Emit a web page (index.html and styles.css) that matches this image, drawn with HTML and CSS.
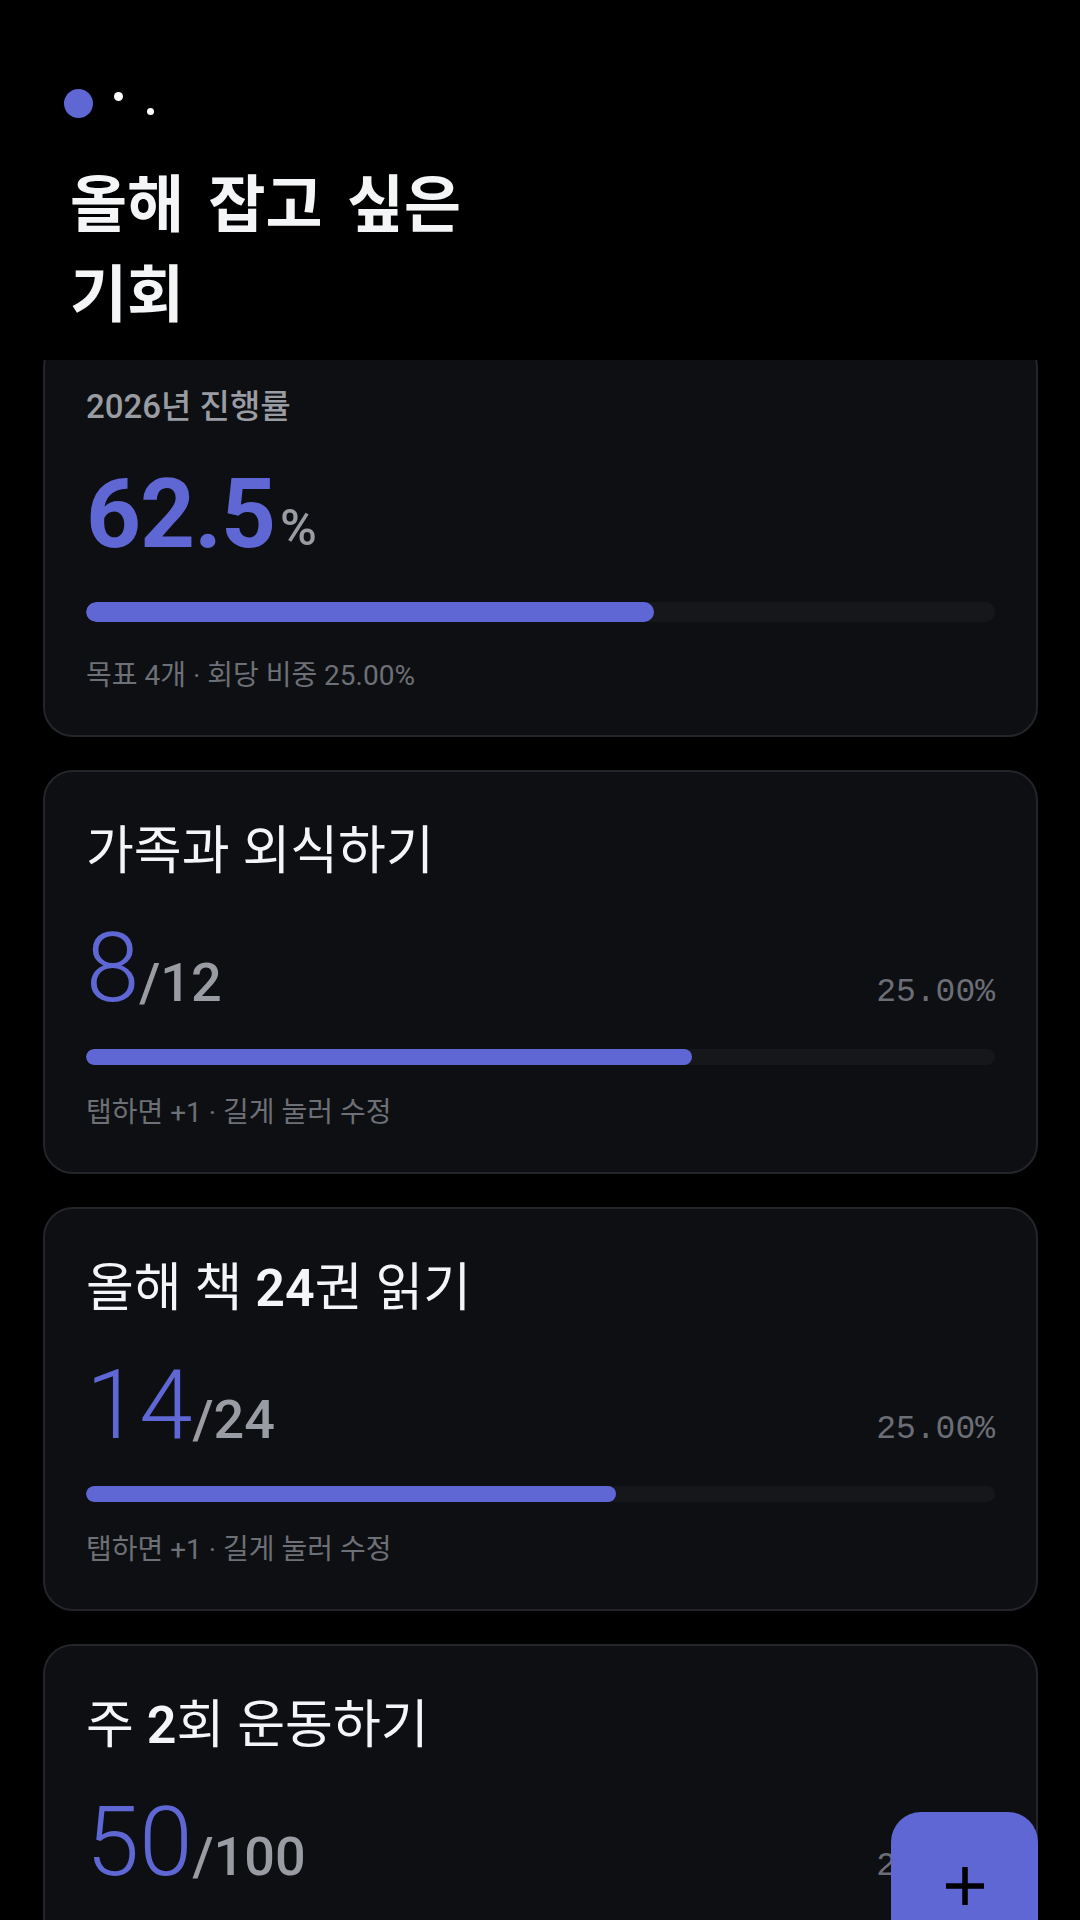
FILE: index.html
```html
<!DOCTYPE html>
<html lang="ko">
<head>
  <meta charset="UTF-8">
  <meta name="viewport" content="width=device-width, initial-scale=1.0">
  <title>올해 잡고 싶은 기회</title>
  <link rel="stylesheet" href="styles.css">
</head>

<body>
 <header class="topBar">
   <svg class="logoDots" width="96" height="30" viewBox="0 0 96 30">
     <circle cx="14.5" cy="14.5" r="14.5" fill="#5e67d3"/>
     <circle cx="54.5" cy="7.5" r="4.5" fill="#fff"/>
     <circle cx="86.5" cy="22.5" r="3.5" fill="#fff"/>
   </svg>
   <h1 class="pageTitle">올해 잡고 싶은<br>기회</h1>
 </header>

 <main class="goalList">
   <!-- 연간 요약 -->
   <section class="card summary">
     <div class="summaryLabel">2026년 진행률</div>
     <div class="countRow">
       <div class="figure bold">62.5<span class="unit">%</span></div>
     </div>
     <div class="track"><div class="fill" style="width:62.5%"></div></div>
     <div class="hint">목표 4개 · 회당 비중 25.00%</div>
   </section>

   <!-- 목표 카드 -->
   <section class="card">
     <h3 class="goalTitle">가족과 외식하기</h3>
     <div class="countRow">
       <div class="figure">8<span class="total">/12</span></div>
       <div class="share">25.00%</div>
     </div>
     <div class="track"><div class="fill" style="width:66.67%"></div></div>
     <div class="hint">탭하면 +1 · 길게 눌러 수정</div>
   </section>

   <section class="card">
     <h3 class="goalTitle">올해 책 <span class="num">24</span>권 읽기</h3>
     <div class="countRow">
       <div class="figure">14<span class="total">/24</span></div>
       <div class="share">25.00%</div>
     </div>
     <div class="track"><div class="fill" style="width:58.33%"></div></div>
     <div class="hint">탭하면 +1 · 길게 눌러 수정</div>
   </section>

   <section class="card">
     <h3 class="goalTitle">주 <span class="num">2</span>회 운동하기</h3>
     <div class="countRow">
       <div class="figure">50<span class="total">/100</span></div>
       <div class="share">25.00%</div>
     </div>
     <div class="track"><div class="fill" style="width:50%"></div></div>
     <div class="hint">탭하면 +1 · 길게 눌러 수정</div>
   </section>
 </main>

 <button class="fab" aria-label="목표 추가">
   <svg width="38" height="38" viewBox="0 0 38 38">
     <path d="M19 0V38M0 19H38" stroke="#000" stroke-width="5.5"/>
   </svg>
 </button>
</body>
</html>
```

FILE: styles.css
```css
html,body{margin:0;padding:0;width:100%;height:100%;overflow:hidden;background:#000;}
body{font-family:Roboto,"Noto Sans CJK KR",sans-serif;color:#f4f5f7;}

/* -------- header -------- */
.topBar{position:relative;z-index:2;background:#000;padding:89px 64px 25px;}
.logoDots{display:block;}
.pageTitle{margin:36px 0 0 6px;font:700 62px/90px "Noto Sans CJK KR",sans-serif;word-spacing:7px;}

/* -------- list -------- */
.goalList{margin-top:-23px;padding:0 42px 0 43px;display:flex;flex-direction:column;gap:33px;}
.card{background:#0e0f12;border:2px solid #24252a;border-radius:30px;padding:48px 41px 41px;}

.summaryLabel{font-size:33px;line-height:40px;font-weight:500;color:#9a9ca3;}
.goalTitle{margin:0;font-size:52px;line-height:64px;font-weight:400;color:#f4f5f7;}
.goalTitle .num{font-weight:600;}

.countRow{display:flex;justify-content:space-between;align-items:baseline;margin-top:36px;}
.figure{font-size:96px;line-height:1;font-weight:300;color:#5e67d3;}
.figure.bold{font-weight:700;letter-spacing:-1px;}
.total{font-size:54px;font-weight:500;color:#9a9ca3;letter-spacing:0;}
.unit{font-size:50px;font-weight:500;color:#9a9ca3;margin-left:5px;vertical-align:.05em;letter-spacing:0;}
.share{font-family:"Liberation Mono",monospace;font-size:33px;line-height:1;color:#6b6e76;}

.track{margin-top:33px;height:16px;border-radius:8px;background:#16171b;overflow:hidden;}
.fill{height:100%;border-radius:inherit;background:#5e67d3;}
.hint{margin-top:30px;font-size:28px;line-height:36px;color:#6d7077;}

.summary .countRow{margin-top:39px;}
.summary .track{margin-top:40px;height:20px;border-radius:10px;}
.summary .hint{margin-top:36px;}

/* -------- add button -------- */
.fab{position:fixed;right:42px;bottom:-39px;width:147px;height:147px;border:0;padding:0;
     border-radius:30px;background:#5e67d3;display:flex;align-items:center;justify-content:center;}
.fab svg{display:block;}
```
